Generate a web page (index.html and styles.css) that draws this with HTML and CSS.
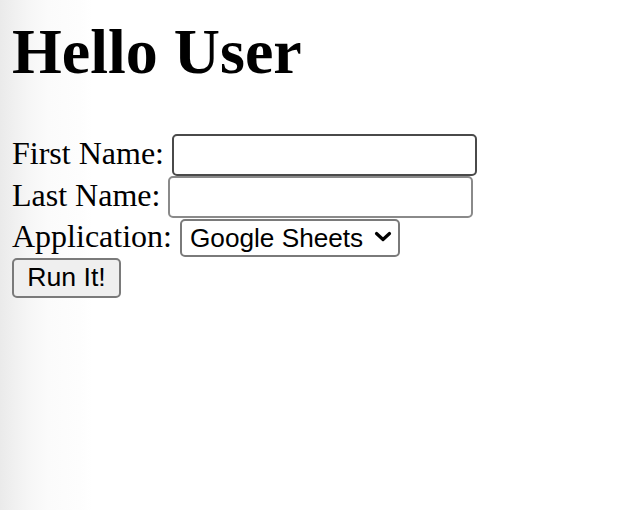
FILE: index.html
```html
<!DOCTYPE html>
<html lang="en">
<head>
<meta charset="utf-8">
<title>Hello User</title>
<link rel="stylesheet" href="styles.css">
</head>
<body class="page">
<h1 class="title">Hello User</h1>
<form class="form">
  <div class="row">First Name: <input class="field field-active" type="text"></div>
  <div class="row">Last Name: <input class="field" type="text"></div>
  <div class="row">Application: <span class="select-wrap"><select class="select"><option>Google Sheets</option></select><svg class="chevron" width="18" height="11" viewBox="0 0 18 11"><path d="M2.5 2.5 L9 8.5 L15.5 2.5" fill="none" stroke="#000" stroke-width="3.2" stroke-linecap="round" stroke-linejoin="round"/></svg></span></div>
  <div class="row"><button class="run" type="button">Run It!</button></div>
</form>
</body>
</html>
```

FILE: styles.css
```css
html {
  background: linear-gradient(to right, #eaeaea 0px, #f1f1f1 16px, #f7f7f7 32px, #fbfbfb 48px, #fdfdfd 80px, #ffffff 92px);
  min-height: 100%;
}

.page {
  margin: 0;
  padding: 15px 12px 0;
  font-family: "Liberation Serif", "Times New Roman", serif;
  font-size: 32px;
  color: #000;
}

.title {
  font-size: 64px;
  font-weight: bold;
  line-height: normal;
  margin: 0 0 45px;
}

.form {
  margin: 0;
}

.row {
  line-height: normal;
}

.field {
  box-sizing: border-box;
  width: 305px;
  height: 42px;
  margin: 0;
  padding: 2px 6px;
  border: 2px solid #8a8a8a;
  border-radius: 5px;
  background: #fff;
  font-family: "Liberation Sans", Arial, sans-serif;
  font-size: 26.67px;
  vertical-align: baseline;
}

.field-active {
  border-color: #4a4a4a;
}

.select-wrap {
  position: relative;
  display: inline-block;
}

.select {
  -webkit-appearance: none;
  appearance: none;
  box-sizing: border-box;
  width: 220px;
  height: 38px;
  margin: 0;
  padding: 0 28px 0 8px;
  border: 2px solid #7a7a7a;
  border-radius: 5px;
  background: #fff;
  color: #000;
  font-family: "Liberation Sans", Arial, sans-serif;
  font-size: 26.2px;
}

.chevron {
  position: absolute;
  right: 8px;
  top: 13px;
  pointer-events: none;
}

.run {
  box-sizing: border-box;
  width: 109px;
  height: 40px;
  margin: 0;
  padding: 0;
  border: 2px solid #7a7a7a;
  border-radius: 5px;
  background: #efefef;
  color: #000;
  font-family: "Liberation Sans", Arial, sans-serif;
  font-size: 26.67px;
}
```
